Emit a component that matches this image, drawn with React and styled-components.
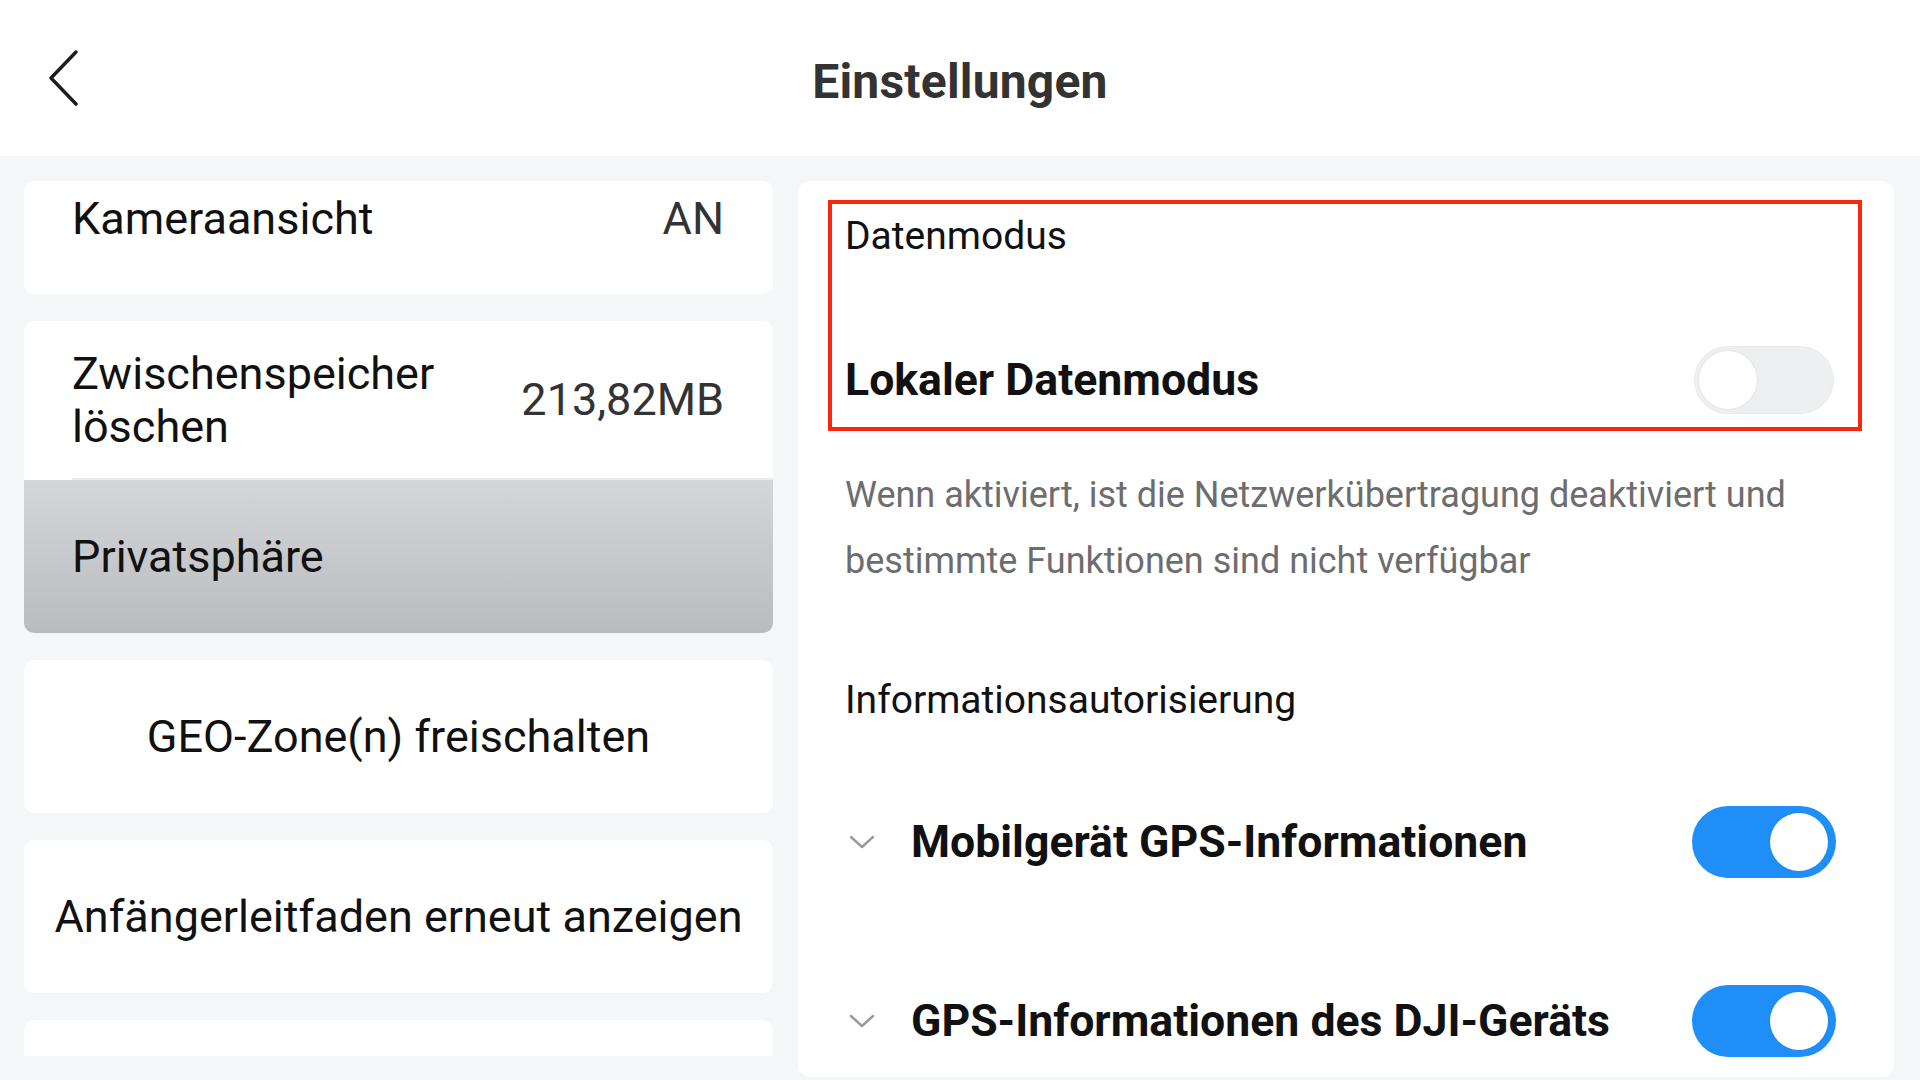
import React from "react";
import styled, { createGlobalStyle } from "styled-components";

const GlobalStyle = createGlobalStyle`
  html, body {
    margin: 0;
    padding: 0;
    background: #f5f6f8;
    font-family: Roboto, "Noto Sans", "Liberation Sans", sans-serif;
  }
  * { box-sizing: border-box; }
`

const Screen = styled.div`
  width: 1920px;
  height: 1080px;
  display: flex;
  flex-direction: column;
  overflow: hidden;
  background: #f5f6f8;
`
const Header = styled.header`
  height: 156px;
  flex: none;
  background: #fff;
  display: grid;
  grid-template-columns: 1fr auto 1fr;
  align-items: center;
  padding: 6px 46px 0;
`
const BackButton = styled.button`
  justify-self: start;
  border: 0;
  background: none;
  padding: 0;
  width: 40px;
  height: 60px;
  margin-top: -6px;
  display: flex;
  align-items: center;
  cursor: pointer;
`
const Title = styled.h1`
  margin: 0;
  font-size: 48px;
  font-weight: 700;
  color: #333;
  letter-spacing: 0.2px;
`
const Body = styled.main`
  flex: 1;
  display: flex;
  gap: 25px;
  padding: 25px 26px 0 24px;
  min-height: 0;
`
const LeftCol = styled.div`
  width: 749px;
  flex: none;
  height: 875px;
  overflow: hidden;
  display: flex;
  flex-direction: column;
  gap: 27px;
`
const Card = styled.div`
  flex: none;
  background: #fff;
  border-radius: 10px;
  overflow: hidden;
  height: ${(p) => (p.$height ? `${p.$height}px` : "auto")};
`
const Row = styled.div`
  display: flex;
  align-items: ${(p) => (p.$top ? "flex-start" : "center")};
  justify-content: ${(p) => (p.$center ? "center" : "space-between")};
  height: ${(p) => p.$height}px;
  padding: ${(p) => (p.$top ? "11px" : "0")} 49px 0 48px;
  font-size: 45px;
  line-height: 53px;
  color: #111;
  background: ${(p) =>
    p.$selected ? "linear-gradient(180deg, #d4d6d9 0%, #b9bbbe 100%)" : "#fff"};
  ${(p) =>
    p.$center &&
    `padding: 0 10px;`}
`
const Divider = styled.div`
  height: 2px;
  margin-left: 48px;
  background: #ececee;
`
const ItemLabel = styled.span`
  max-width: 400px;
`
const ItemValue = styled.span`
  color: #333;
  white-space: nowrap;
`
const RightPanel = styled.section`
  flex: 1;
  background: #fff;
  border-radius: 12px;
  margin-bottom: 3px;
  padding: 19px 32px 0 30px;
  display: flex;
  flex-direction: column;
`
const Highlight = styled.div`
  height: 231px;
  border: 4px solid #f7260c;
  display: flex;
  flex-direction: column;
  padding: 12px 25px 14px 13px;
`
const SectionTitle = styled.div`
  font-size: 39px;
  line-height: 40px;
  color: #111;
  margin-top: ${(p) => p.$mt || 0}px;
  padding-left: ${(p) => (p.$inset ? 17 : 0)}px;
`
const SwitchRow = styled.div`
  display: flex;
  align-items: center;
  justify-content: space-between;
  margin-top: ${(p) => (p.$auto ? "auto" : `${p.$mt || 0}px`)};
  padding: ${(p) => (p.$inset ? "0 26px 0 21px" : "0")};
`
const SwitchLabel = styled.div`
  display: flex;
  align-items: center;
  gap: 36px;
  font-size: 44.6px;
  font-weight: 700;
  color: #111;
`
const Description = styled.p`
  margin: 31px 0 0;
  padding-left: 17px;
  font-size: 36px;
  line-height: 66px;
  color: #6d6d6f;
  max-width: 1010px;
`
const Switch = styled.span`
  flex: none;
  display: flex;
  align-items: center;
  justify-content: ${(p) => (p.$on ? "flex-end" : "flex-start")};
  width: ${(p) => (p.$on ? 144 : 138)}px;
  height: ${(p) => (p.$on ? 72 : 66)}px;
  padding: 0 ${(p) => (p.$on ? 8 : 4)}px;
  border-radius: 40px;
  background: ${(p) => (p.$on ? "#1f8ff7" : "#eeeff1")};
  box-shadow: ${(p) => (p.$on ? "none" : "0 0 0 1px #e9eaec")};
`
const Knob = styled.span`
  width: 58px;
  height: 58px;
  border-radius: 50%;
  background: #fff;
  box-shadow: 0 0 2px rgba(0, 0, 0, 0.12);
`

const Chevron = () => (
  <svg width="26" height="14" viewBox="0 0 26 14" fill="none">
    <polyline points="2,2 13,12 24,2" stroke="#9a9a9a" strokeWidth="2.4" strokeLinecap="round" strokeLinejoin="round" />
  </svg>
);

const BackIcon = () => (
  <svg width="34" height="56" viewBox="0 0 34 56" fill="none">
    <polyline points="30,2 5,28 30,54" stroke="#1c1c1c" strokeWidth="3.4" strokeLinecap="round" strokeLinejoin="round" />
  </svg>
);

export default function App() {
  return (
    <>
      <GlobalStyle />
      <Screen>
        <Header>
          <BackButton aria-label="Zurück">
            <BackIcon />
          </BackButton>
          <Title>Einstellungen</Title>
          <div />
        </Header>
        <Body>
          <LeftCol>
            <Card $height={113}>
              <Row $top $height={113}>
                <ItemLabel>Kameraansicht</ItemLabel>
                <ItemValue>AN</ItemValue>
              </Row>
            </Card>
            <Card>
              <Row $height={157}>
                <ItemLabel>Zwischenspeicher löschen</ItemLabel>
                <ItemValue>213,82MB</ItemValue>
              </Row>
              <Divider />
              <Row $height={153} $selected>
                <ItemLabel>Privatsphäre</ItemLabel>
              </Row>
            </Card>
            <Card>
              <Row $height={153} $center>
                GEO-Zone(n) freischalten
              </Row>
            </Card>
            <Card>
              <Row $height={153} $center>
                Anfängerleitfaden erneut anzeigen
              </Row>
            </Card>
            <Card $height={153} />
          </LeftCol>
          <RightPanel>
            <Highlight>
              <SectionTitle>Datenmodus</SectionTitle>
              <SwitchRow $auto>
                <SwitchLabel>Lokaler Datenmodus</SwitchLabel>
                <Switch>
                  <Knob />
                </Switch>
              </SwitchRow>
            </Highlight>
            <Description>
              Wenn aktiviert, ist die Netzwerkübertragung deaktiviert und bestimmte Funktionen sind nicht verfügbar
            </Description>
            <SectionTitle $inset $mt={86}>Informationsautorisierung</SectionTitle>
            <SwitchRow $inset $mt={86}>
              <SwitchLabel>
                <Chevron />
                Mobilgerät GPS-Informationen
              </SwitchLabel>
              <Switch $on>
                <Knob />
              </Switch>
            </SwitchRow>
            <SwitchRow $inset $mt={107}>
              <SwitchLabel>
                <Chevron />
                GPS-Informationen des DJI-Geräts
              </SwitchLabel>
              <Switch $on>
                <Knob />
              </Switch>
            </SwitchRow>
          </RightPanel>
        </Body>
      </Screen>
    </>
  );
}
